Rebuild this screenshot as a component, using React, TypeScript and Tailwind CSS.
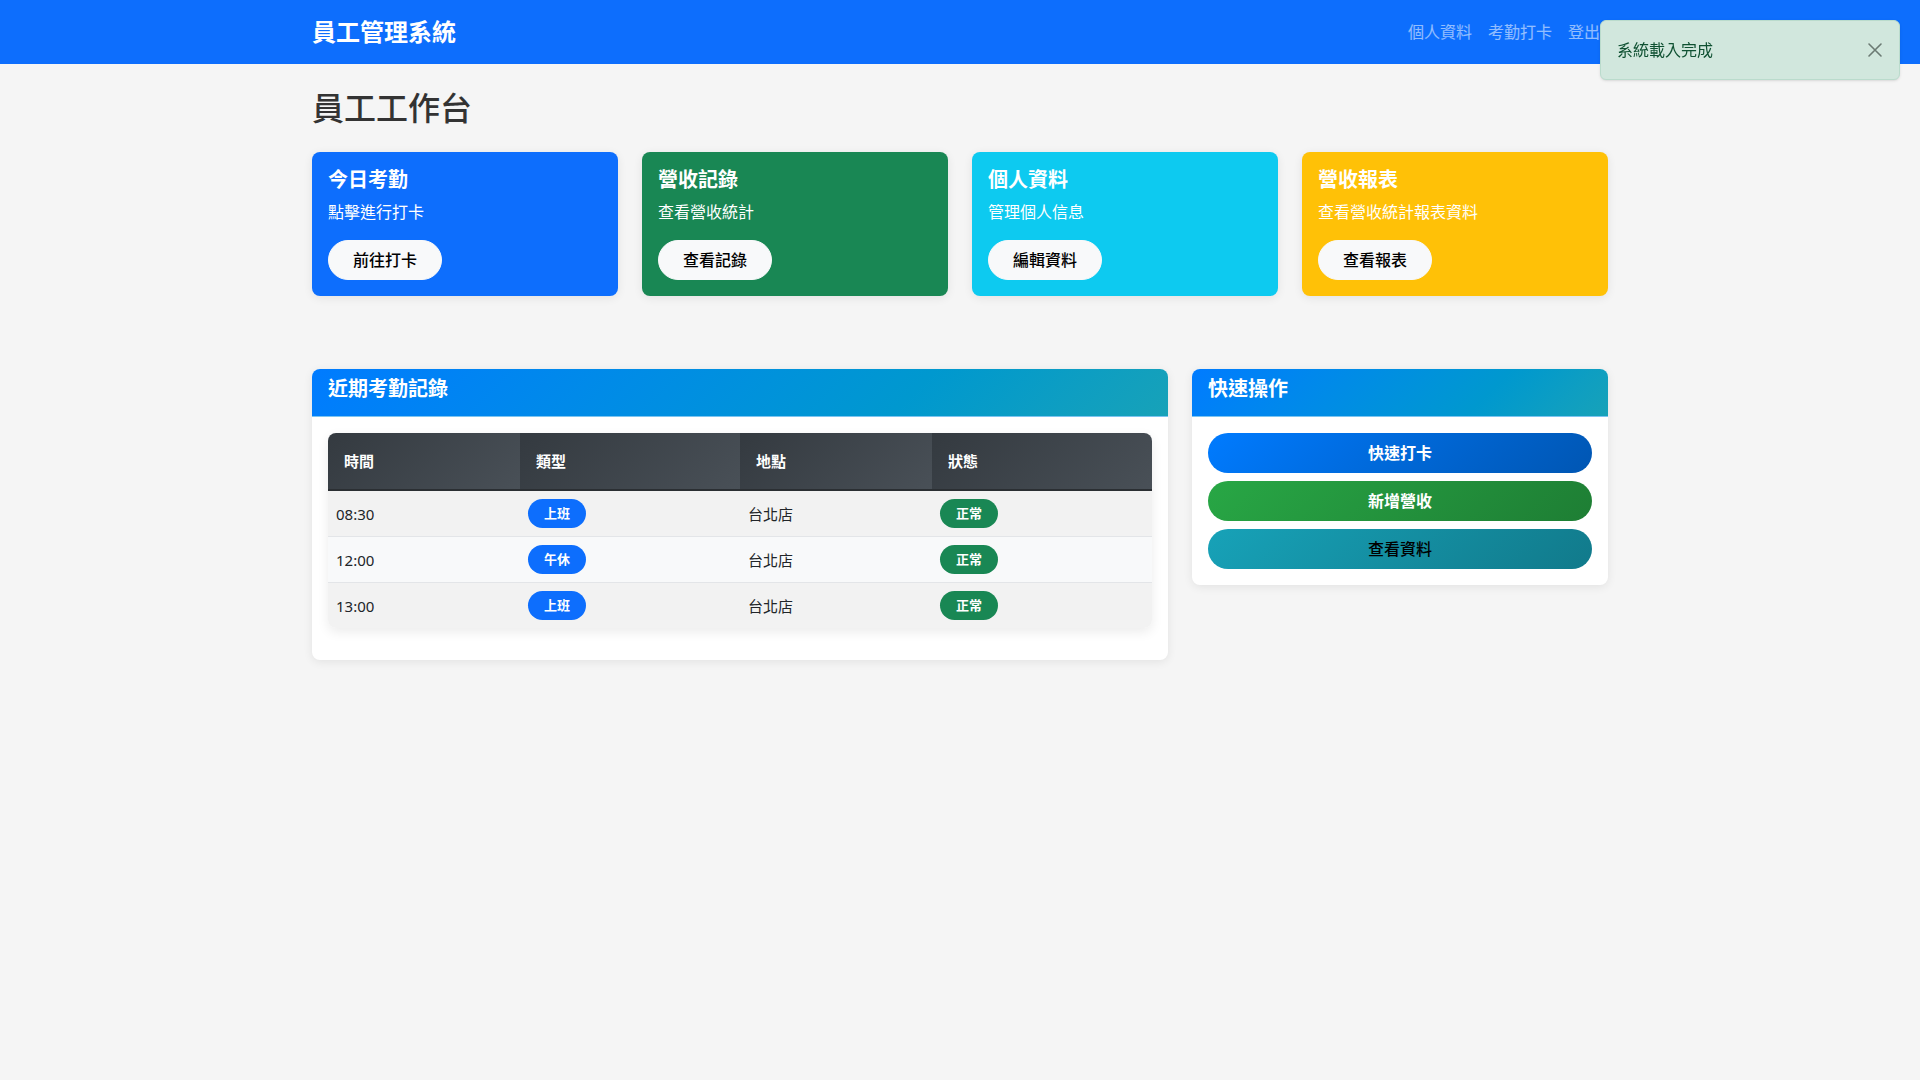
import React from 'react';

const summaryCards = [
  { title: '今日考勤', desc: '點擊進行打卡', action: '前往打卡', bg: 'bg-[#0d6efd]' },
  { title: '營收記錄', desc: '查看營收統計', action: '查看記錄', bg: 'bg-[#198754]' },
  { title: '個人資料', desc: '管理個人信息', action: '編輯資料', bg: 'bg-[#0dcaf0]' },
  { title: '營收報表', desc: '查看營收統計報表資料', action: '查看報表', bg: 'bg-[#ffc107]' },
];

const records = [
  { time: '08:30', type: '上班', place: '台北店', status: '正常' },
  { time: '12:00', type: '午休', place: '台北店', status: '正常' },
  { time: '13:00', type: '上班', place: '台北店', status: '正常' },
];

const App: React.FC = () => {
  return (
    <div className="min-h-screen bg-[#f5f5f5] font-['Noto_Sans','Noto_Sans_CJK_TC',sans-serif] text-[#212529]">
      <nav className="h-16 bg-[#0d6efd]">
        <div className="w-[1320px] mx-auto px-3 h-full flex items-center justify-between">
          <span className="text-2xl font-bold text-white">員工管理系統</span>
          <div className="flex">
            <a className="px-2 text-base text-white/55">個人資料</a>
            <a className="px-2 text-base text-white/55">考勤打卡</a>
            <a className="px-2 text-base text-white/55">登出</a>
          </div>
        </div>
      </nav>

      {/* toast */}
      <div className="fixed top-5 right-5 w-[300px] h-[60px] flex items-center justify-between px-4 rounded-md border border-[#badbcc] bg-[#d1e7dd] text-[#0f5132] shadow-sm">
        <span className="text-base">系統載入完成</span>
        <svg width="16" height="16" viewBox="0 0 16 16" className="text-[#6b7a73]">
          <path d="M2 2 L14 14 M14 2 L2 14" stroke="currentColor" strokeWidth="1.6" strokeLinecap="round" />
        </svg>
      </div>

      <main className="w-[1320px] mx-auto px-3 pt-[25px]">
        <h2 className="text-[32px] font-medium leading-[1.2] text-[#333] mb-[25px]">員工工作台</h2>

        <div className="grid grid-cols-4 gap-6">
          {summaryCards.map((c) => (
            <div key={c.title} className={`${c.bg} rounded-lg p-4 text-white shadow-[0_2px_10px_rgba(0,0,0,0.08)]`}>
              <h5 className="text-xl font-bold leading-[1.2] mb-2">{c.title}</h5>
              <p className="text-base leading-6 mb-4">{c.desc}</p>
              <button className="h-10 px-6 rounded-full bg-[#f8f9fa] border border-[#f8f9fa] text-black text-base font-medium">
                {c.action}
              </button>
            </div>
          ))}
        </div>

        <div className="mt-[73px] grid grid-cols-[856px_416px] gap-6 items-start">
          <div className="bg-white rounded-lg overflow-hidden shadow-[0_2px_10px_rgba(0,0,0,0.08)]">
            <div className="h-12 px-4 pt-2 bg-linear-135 from-[#007bff] to-[#17a2b8] border-b border-[#7cc4f0]">
              <h5 className="text-xl font-bold leading-[1.2] text-white">近期考勤記錄</h5>
            </div>
            <div className="p-4 pb-8">
              <div className="rounded-lg overflow-hidden shadow-[0_4px_12px_rgba(0,0,0,0.08)]">
                <table className="w-full border-collapse text-[15px]">
                  <thead>
                    <tr className="border-b-2 border-[#2b2f33]">
                      <th className="w-[192px] px-4 py-4 text-left font-bold text-white leading-6 bg-linear-135 from-[#343a40] to-[#495057]">時間</th>
                      <th className="w-[220px] px-4 py-4 text-left font-bold text-white leading-6 bg-linear-135 from-[#343a40] to-[#495057]">類型</th>
                      <th className="w-[192px] px-4 py-4 text-left font-bold text-white leading-6 bg-linear-135 from-[#343a40] to-[#495057]">地點</th>
                      <th className="px-4 py-4 text-left font-bold text-white leading-6 bg-linear-135 from-[#343a40] to-[#495057]">狀態</th>
                    </tr>
                  </thead>
                  <tbody>
                    {records.map((r, i) => (
                      <tr key={r.time} className={`${i % 2 === 0 ? 'bg-[#f2f2f2]' : 'bg-[#f8f9fa]'} border-b border-[#e3e5e8] last:border-b-0`}>
                        <td className="px-2 py-2 leading-6">{r.time}</td>
                        <td className="px-2 py-2">
                          <span className="inline-flex items-center h-[29px] px-4 rounded-full bg-[#0d6efd] text-white text-[13px] font-bold">{r.type}</span>
                        </td>
                        <td className="px-2 py-2 leading-6">{r.place}</td>
                        <td className="px-2 py-2">
                          <span className="inline-flex items-center h-[29px] px-4 rounded-full bg-[#198754] text-white text-[13px] font-bold">{r.status}</span>
                        </td>
                      </tr>
                    ))}
                  </tbody>
                </table>
              </div>
            </div>
          </div>

          <div className="bg-white rounded-lg overflow-hidden shadow-[0_2px_10px_rgba(0,0,0,0.08)]">
            <div className="h-12 px-4 pt-2 bg-linear-135 from-[#007bff] to-[#17a2b8] border-b border-[#7cc4f0]">
              <h5 className="text-xl font-bold leading-[1.2] text-white">快速操作</h5>
            </div>
            <div className="p-4 flex flex-col gap-2">
              <button className="h-10 rounded-full bg-linear-135 from-[#007bff] to-[#0056b3] text-white text-base font-bold">快速打卡</button>
              <button className="h-10 rounded-full bg-linear-135 from-[#28a745] to-[#1e7e34] text-white text-base font-bold">新增營收</button>
              <button className="h-10 rounded-full bg-linear-135 from-[#17a2b8] to-[#117a8b] text-black text-base font-medium">查看資料</button>
            </div>
          </div>
        </div>
      </main>
    </div>
  );
};

export default App;
